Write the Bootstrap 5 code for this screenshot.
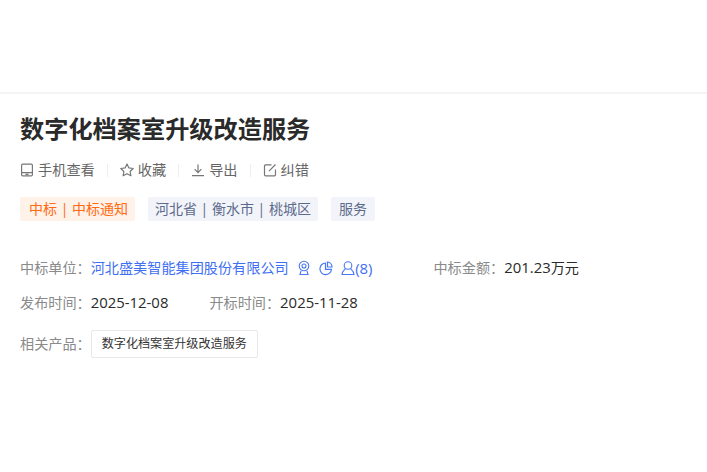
<!DOCTYPE html>
<html lang="zh"><head><meta charset="utf-8">
<link href="https://cdn.jsdelivr.net/npm/bootstrap@5.3.0/dist/css/bootstrap.min.css" rel="stylesheet">
<style>
html,body{height:100%;overflow:hidden}
body{font-family:"Open Sans","Noto Sans CJK SC",sans-serif;color:#333;background:#fff;font-size:14.15px}
.topband{height:94px;border-bottom:2px solid #f4f4f5}
.sheet{padding:18px 20px 0}
.ttl{font-size:24.2px;font-weight:700;line-height:34px;color:#2a2a2a;margin:0}
.acts{margin-top:13px;height:22px;color:#666;font-size:14.2px}
.act{display:flex;align-items:center;gap:4px;line-height:22px}
.act svg{width:14px;height:14px;flex:none}
.sep{width:1px;height:13px;background:#eceef2;margin:0 12px}
.tags{margin-top:16px;gap:13px}
.tg{height:24px;line-height:24px;padding:0 7px;border-radius:2px;background:#f2f4f9;color:#5c6a8c;font-size:14px}
.tg-o{background:#fff2e9;color:#ff6a13;padding:0 7px 0 9px}
.tg-s{padding:0 8px}
.rowx{height:22px;line-height:22px;color:#2a2a2a}
.lbl{color:#8a8a8a}
.r1{margin-top:36px}
.r2{margin-top:13px}
.r3{margin-top:19px;align-items:center}
.lnk{color:#3f6ff2;text-decoration:none}
.ic{width:14px;height:16px;margin-left:8px;flex:none}
.ic0{margin-left:8.500px}
.prod{font-size:12.100px;line-height:26px;border:1px solid #e8e8e8;border-radius:2px;padding:0 10px;color:#333;background:#fff}
.amt{margin-left:61px}
.opn{margin-left:41px}
.dt{font-size:14.900px;line-height:20px}
</style></head><body>
<div class="topband"></div>
<div class="sheet">
<h1 class="ttl">数字化档案室升级改造服务</h1>
<div class="acts d-flex align-items-center">
<div class="act"><svg viewBox="0 0 14 14" fill="none" stroke="#777" stroke-width="1.2"><rect x="1.6" y="1.1" width="10.8" height="11.8" rx="1.2"/><path d="M1.6 9.6h10.8M5.5 11.3h3"/></svg>手机查看</div><span class="sep"></span>
<div class="act"><svg viewBox="0 0 14 14" fill="none" stroke="#777" stroke-width="1.2" stroke-linejoin="round"><path d="M7 1l1.900 3.900 4.300.6-3.100 3 .8 4.300L7 10.700l-3.900 2.100.8-4.300-3.100-3 4.300-.6z"/></svg>收藏</div><span class="sep"></span>
<div class="act"><svg viewBox="0 0 14 14" fill="none" stroke="#777" stroke-width="1.2"><path d="M7 1.500v8M3.600 6.200L7 9.600l3.400-3.400M1 12.600h12"/></svg>导出</div><span class="sep"></span>
<div class="act"><svg viewBox="0 0 14 14" fill="none" stroke="#777" stroke-width="1.200"><path d="M12.500 6.500v5.300a1 1 0 0 1-1 1H2.500a1 1 0 0 1-1-1V2.800a1 1 0 0 1 1-1h6M6 8.200l6.500-6.700"/></svg>纠错</div>
</div>
<div class="tags d-flex">
<span class="tg tg-o">中标 | 中标通知</span>
<span class="tg">河北省 | 衡水市 | 桃城区</span>
<span class="tg tg-s">服务</span>
</div>
<div class="rowx r1 d-flex align-items-center">
<span class="lbl">中标单位：</span><a class="lnk" href="#">河北盛美智能集团股份有限公司</a>
<svg class="ic ic0" viewBox="0 0 14 16" fill="none" stroke="#4a78f5" stroke-width="1.100"><circle cx="7" cy="6" r="4.800"/><circle cx="7" cy="6" r="2"/><path d="M4 10.800L3 14.500h8l-1-3.700"/></svg>
<svg class="ic" viewBox="0 0 14 16" fill="none" stroke="#4a78f5" stroke-width="1.200"><path d="M6.500 3a5.800 5.800 0 1 0 6 6.300H6.500z"/><path d="M8.500 2a5 5 0 0 1 4.500 5H8.500z"/></svg>
<svg class="ic" viewBox="0 0 14 16" fill="none" stroke="#4a78f5" stroke-width="1.100"><circle cx="7" cy="5.500" r="3.800"/><path d="M4.500 8.500C3 10 1 11.500 1 14.500h12c0-3-2-4.500-3.500-6"/></svg><a class="lnk dt" href="#">(8)</a>
<span class="lbl amt">中标金额：</span><span><span class="dt">201.23</span>万元</span>
</div>
<div class="rowx r2 d-flex">
<span class="lbl">发布时间：</span><span class="dt">2025-12-08</span>
<span class="lbl opn">开标时间：</span><span class="dt">2025-11-28</span>
</div>
<div class="rowx r3 d-flex">
<span class="lbl">相关产品：</span><span class="prod">数字化档案室升级改造服务</span>
</div>
</div>
<script src="https://cdn.jsdelivr.net/npm/bootstrap@5.3.0/dist/js/bootstrap.bundle.min.js"></script>
</body></html>
